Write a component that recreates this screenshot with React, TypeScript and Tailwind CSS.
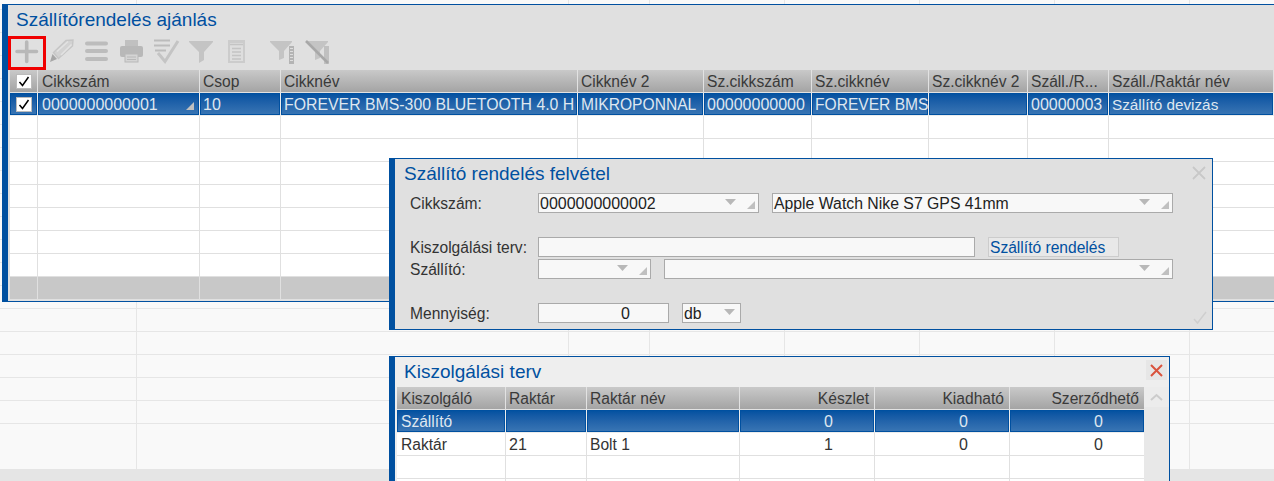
import React from "react";

const ICON = "#c4c4c4";

function BgRow({ h, line }: { h: string; line: boolean }) {
  const cell = `border-r border-[#e6e6e6] ${line ? "border-b" : ""}`;
  return (
    <div className={`grid grid-cols-[137px_432px_81px_135px_135px_135px_135px_84px] ${h}`}>
      <div className={cell} />
      <div className={cell} />
      <div className={cell} />
      <div className={cell} />
      <div className={cell} />
      <div className={cell} />
      <div className={cell} />
      <div className={line ? "border-b border-[#e6e6e6]" : ""} />
    </div>
  );
}

function Check() {
  return (
    <div className="w-[16px] h-[15px] bg-white border border-[#bbbbbb] flex items-center justify-center">
      <svg viewBox="0 0 14 13" className="w-[14px] h-[13px]">
        <path d="M2.5 7 L5.5 10.5 L11.5 2" fill="none" stroke="#000" strokeWidth="1.5" />
      </svg>
    </div>
  );
}

const Corner = ({ className }: { className: string }) => (
  <svg viewBox="0 0 8 8" className={`w-[8px] h-[8px] ${className}`}>
    <path d="M8 0 V8 H0 Z" fill="#c0c0c0" />
  </svg>
);

const Down = () => (
  <svg viewBox="0 0 11 6" className="w-[11px] h-[6px]">
    <path d="M0 0 H11 L5.5 6 Z" fill="#b8b8b8" />
  </svg>
);

const mainCols = "grid grid-cols-[28px_162px_81px_297px_126px_108px_117px_99px_81px_165px]";
const planCols = "grid grid-cols-[109px_81px_153px_135px_135px_135px]";

const hCell = "border-r border-[#e2e2e2] bg-linear-to-b from-[#c9c9c9] to-[#a4a4a4] text-[#3a3a3a] px-[3px] leading-[24px] overflow-hidden whitespace-nowrap";
const selCell = "border-r border-[#ececec] bg-linear-to-b from-[#0050a0] to-[#3a76b4] shadow-[inset_0_0_0_1px_#0050a0] text-[#dfe7f0] px-[3px] leading-[24px] overflow-hidden whitespace-nowrap";
const emptyCell = "border-r border-[#e0e0e0]";
const digits = "text-[16px]";

function MainEmptyRow({ gray }: { gray?: boolean }) {
  const c = emptyCell;
  return (
    <div className={`${mainCols} h-[23px] border-b border-[#e0e0e0] ${gray ? "bg-[#c8c8c8]" : "bg-white"}`}>
      <div className={c} /><div className={c} /><div className={c} /><div className={c} /><div className={c} />
      <div className={c} /><div className={c} /><div className={c} /><div className={c} /><div />
    </div>
  );
}

function PlanEmptyRow() {
  const c = emptyCell;
  return (
    <div className={`${planCols} h-[23px] border-b border-[#e0e0e0] bg-white`}>
      <div className={c} /><div className={c} /><div className={c} /><div className={c} /><div className={c} /><div className={c} />
    </div>
  );
}

function MainPanel() {
  return (
    <div className="absolute left-[2px] top-[4px] w-[1272px] h-[298px] bg-[#e0e0e0] border-l-[6px] border-t border-b border-[#0050a0]">
      <div className="h-[31px] pl-[8px] pt-[4px] text-[19px] leading-[21px] text-[#0050a0]">Szállítórendelés ajánlás</div>
      <div className="relative h-[34px] pl-[2px] pt-[1px] flex">
        <div className="absolute left-0 top-0 w-[38px] h-[34px] border-[3px] border-[#f00000]" />
        <svg viewBox="10 37 34 28" className="w-[34px] h-[28px]">
          <path d="M17 51.5 H36.5 M26.7 42 V61.5" stroke="#b8b8b8" strokeWidth="3.6" strokeLinecap="round" fill="none" />
        </svg>
        <svg viewBox="44 37 35 28" className="w-[35px] h-[28px]">
          <path d="M50 62 L52.5 54 L57 59 Z" fill="#a6a6a6" />
          <path d="M53.5 52.5 L66 40.5 L73 40 L72.5 46 L58.5 58.5 Z" fill="#d2d2d2" stroke="#c6c6c6" strokeWidth="1.4" />
          <path d="M57 51.5 L68 41.5 M61 55 L71.5 44.5" fill="none" stroke="#e2e2e2" strokeWidth="1.6" />
        </svg>
        <svg viewBox="79 37 35 28" className="w-[35px] h-[28px]">
          <path d="M87 43.5 H106 M87 51 H106 M87 59 H106" stroke="#bcbcbc" strokeWidth="4" strokeLinecap="round" fill="none" />
        </svg>
        <svg viewBox="114 37 35 28" className="w-[35px] h-[28px]">
          <rect x="125" y="40" width="13" height="6" fill="#c0c0c0" />
          <rect x="120" y="46" width="23" height="11" rx="2" fill="#b8b8b8" />
          <rect x="125" y="54" width="13" height="8" fill="#d4d4d4" stroke="#b8b8b8" />
          <path d="M127 57 H136 M127 59.5 H136" stroke="#b8b8b8" strokeWidth="1" />
        </svg>
        <svg viewBox="149 37 35 28" className="w-[35px] h-[28px]">
          <path d="M154 40.5 H170 M154 45.5 H170 M155 50.5 H166" stroke="#bcbcbc" strokeWidth="1.8" fill="none" />
          <path d="M158 53 L165 61.5 L178 41" stroke="#c4c4c4" strokeWidth="3" fill="none" />
        </svg>
        <svg viewBox="184 37 35 28" className="w-[35px] h-[28px]">
          <path d="M189 41 H213 V42 L204 52 V60 L199 63 V52 L189 42 Z" fill={ICON} />
        </svg>
        <svg viewBox="219 37 35 28" className="w-[35px] h-[28px]">
          <rect x="228" y="40" width="17" height="23" fill="#cccccc" />
          <rect x="230" y="43" width="13" height="18" fill="#dedede" />
          <path d="M230 44.5 H243 M232 48.5 H241 M232 52 H241 M232 55.5 H241 M232 59 H241" stroke="#c4c4c4" strokeWidth="1.5" fill="none" />
        </svg>
        <div className="w-[9px]" />
        <svg viewBox="263 37 36 28" className="w-[36px] h-[28px]">
          <path d="M270 41 H292 V42 L284 51 V58 L279 60 V51 L270 42 Z" fill={ICON} />
          <rect x="289" y="46" width="5" height="18" fill="#b4b4b4" />
          <path d="M290 48.5 H293 M290 51.5 H293 M290 54.5 H293 M290 57.5 H293 M290 60.5 H293" stroke="#dedede" strokeWidth="1" />
        </svg>
        <svg viewBox="299 37 36 28" className="w-[36px] h-[28px]">
          <path d="M306 41 H328 V42 L320 51 V58 L315 60 V51 L306 42 Z" fill={ICON} />
          <rect x="324" y="46" width="5" height="18" fill="#c0c0c0" />
          <path d="M306 41 L328 63" stroke="#a8a8a8" strokeWidth="2.6" />
        </svg>
      </div>
      <div className="pl-[2px] w-[1266px] text-[15.6px]">
        <div className={`${mainCols} h-[23px] border-b border-[#e2e2e2]`}>
          <div className={`${hCell} flex items-center justify-center !px-0`}><Check /></div>
          <div className={`${hCell} !pl-[4px]`}>Cikkszám</div>
          <div className={hCell}>Csop</div>
          <div className={hCell}>Cikknév</div>
          <div className={hCell}>Cikknév 2</div>
          <div className={hCell}>Sz.cikkszám</div>
          <div className={hCell}>Sz.cikknév</div>
          <div className={hCell}>Sz.cikknév 2</div>
          <div className={hCell}>Száll./R...</div>
          <div className={hCell}>Száll./Raktár név</div>
        </div>
        <div className={`${mainCols} h-[23px] border-b border-[#ececec]`}>
          <div className={`${selCell} flex items-center justify-center !px-0`}><Check /></div>
          <div className={`${selCell} ${digits} relative !pl-[4px]`}>0000000000001<Corner className="absolute right-[5px] top-[9px]" /></div>
          <div className={`${selCell} ${digits}`}>10</div>
          <div className={`${selCell} text-[15.85px]`}>FOREVER BMS-300 BLUETOOTH 4.0 H</div>
          <div className={selCell}>MIKROPONNAL</div>
          <div className={`${selCell} ${digits}`}>00000000000</div>
          <div className={`${selCell} !pr-[5px]`}>FOREVER BMS</div>
          <div className={selCell} />
          <div className={`${selCell} ${digits}`}>00000003</div>
          <div className={`${selCell} text-[15.3px]`}>Szállító devizás</div>
        </div>
        <MainEmptyRow />
        <MainEmptyRow />
        <MainEmptyRow />
        <MainEmptyRow />
        <MainEmptyRow />
        <MainEmptyRow />
        <MainEmptyRow />
        <MainEmptyRow gray />
      </div>
    </div>
  );
}

function Combo({ className, text }: { className: string; text?: string }) {
  return (
    <div className={`h-[20px] bg-[#f8f8f8] border border-[#aaaaaa] pl-[1px] leading-[20px] relative text-[#222222] ${className}`}>
      {text}
      <div className="absolute right-[22px] top-[5px]"><Down /></div>
      <Corner className="absolute right-[3px] top-[7px]" />
    </div>
  );
}

function OrderDialog() {
  const row = "flex h-[20px] pl-[15px]";
  const label = "w-[128px] text-[#333333] leading-[22px] text-[15.6px]";
  return (
    <div className="absolute left-[389px] top-[158px] w-[824px] h-[172px] bg-[#e0e0e0] border-l-[6px] border-t border-r border-b border-[#0050a0] text-[15.8px]">
      <div className="h-[34px] pl-[9px] pt-[4px] text-[19px] leading-[21px] text-[#0050a0]">Szállító rendelés felvétel</div>
      <svg viewBox="0 0 14 14" className="absolute right-[6px] top-[7px] w-[14px] h-[14px]">
        <path d="M1 1 L13 13 M13 1 L1 13" stroke="#c8c8c8" strokeWidth="1.8" />
      </svg>
      <div className={row}>
        <div className={label}>Cikkszám:</div>
        <Combo className={`w-[221px] ${digits}`} text="0000000000002" />
        <Combo className="w-[401px] ml-[13px]" text="Apple Watch Nike S7 GPS 41mm" />
      </div>
      <div className={`${row} mt-[24px]`}>
        <div className={label}>Kiszolgálási terv:</div>
        <div className="w-[437px] h-[20px] bg-[#f8f8f8] border border-[#aaaaaa]" />
        <div className="w-[131px] h-[20px] ml-[13px] bg-[#e8e8e8] border border-[#cccccc] text-[#0050a0] text-[15.6px] pl-[1px] leading-[20px]">Szállító rendelés</div>
      </div>
      <div className={`${row} mt-[2px]`}>
        <div className={label}>Szállító:</div>
        <Combo className="w-[113px]" />
        <Combo className="w-[509px] ml-[13px]" />
      </div>
      <div className={`${row} mt-[24px]`}>
        <div className={label}>Mennyiség:</div>
        <div className="w-[131px] h-[20px] bg-[#f8f8f8] border border-[#aaaaaa] pl-[82px] leading-[20px] text-[#222222] text-[16px]">0</div>
        <div className="w-[59px] h-[20px] ml-[13px] bg-[#f8f8f8] border border-[#aaaaaa] pl-[1px] leading-[20px] relative text-[#222222]">
          db
          <div className="absolute right-[5px] top-[5px]"><Down /></div>
        </div>
      </div>
      <svg viewBox="0 0 14 13" className="absolute right-[5px] bottom-[5px] w-[14px] h-[13px]">
        <path d="M1 8 L4.5 12 L13 1" fill="none" stroke="#cfcfcf" strokeWidth="1.5" />
      </svg>
    </div>
  );
}

function PlanDialog() {
  const r = "text-right !pr-[5px]";
  const sr = `${selCell} ${digits} text-right !pr-[41px]`;
  const wr = "border-r border-[#e0e0e0] px-[3px] leading-[24px] text-[#333333]";
  const wc = `${wr} ${digits} text-right !pr-[41px]`;
  return (
    <div className="absolute left-[389px] top-[356px] w-[781px] h-[140px] bg-[#eeeeee] border-l-[6px] border-t border-r border-[#0050a0] text-[15.6px]">
      <div className="h-[30px] pl-[9px] pt-[4px] text-[19px] leading-[21px] text-[#0050a0]">Kiszolgálási terv</div>
      <div className="absolute left-[751px] top-[3px] w-[21px] h-[20px] bg-[#e6e6e6] flex items-center justify-center">
        <svg viewBox="0 0 13 13" className="w-[13px] h-[13px]">
          <path d="M1 1 L12 12 M12 1 L1 12" stroke="#d9533d" strokeWidth="2" />
        </svg>
      </div>
      <div className="absolute left-[749px] top-[30px] w-[25px] h-[120px] bg-[#e8e8e8]">
        <div className="h-[20px] bg-[#ececec] flex items-center justify-center">
          <svg viewBox="0 0 13 8" className="w-[13px] h-[8px]">
            <path d="M1 7 L6.5 2 L12 7" fill="none" stroke="#cccccc" strokeWidth="2" />
          </svg>
        </div>
      </div>
      <div className="ml-[2px] w-[748px]">
        <div className={`${planCols} h-[23px] border-b border-[#e2e2e2]`}>
          <div className={`${hCell} !pl-[4px]`}>Kiszolgáló</div>
          <div className={hCell}>Raktár</div>
          <div className={hCell}>Raktár név</div>
          <div className={`${hCell} ${r}`}>Készlet</div>
          <div className={`${hCell} ${r}`}>Kiadható</div>
          <div className={`${hCell} ${r}`}>Szerződhető</div>
        </div>
        <div className={`${planCols} h-[23px] border-b border-[#ececec]`}>
          <div className={`${selCell} !pl-[4px]`}>Szállító</div>
          <div className={selCell} />
          <div className={selCell} />
          <div className={sr}>0</div>
          <div className={sr}>0</div>
          <div className={sr}>0</div>
        </div>
        <div className={`${planCols} h-[23px] border-b border-[#e0e0e0] bg-white`}>
          <div className={`${wr} !pl-[4px]`}>Raktár</div>
          <div className={`${wr} ${digits}`}>21</div>
          <div className={wr}>Bolt 1</div>
          <div className={wc}>1</div>
          <div className={wc}>0</div>
          <div className={wc}>0</div>
        </div>
        <PlanEmptyRow />
        <PlanEmptyRow />
      </div>
    </div>
  );
}

export default function App() {
  const rows = Array.from({ length: 19 });
  return (
    <div className="relative w-[1274px] h-[481px] overflow-hidden bg-[#e5e5e5] font-['Liberation_Sans',Arial,sans-serif]">
      <div className="bg-[#f9f9f9] h-[469px]">
        <BgRow h="h-[10px]" line />
        {rows.map((_, i) => (
          <BgRow key={i} h="h-[23px]" line={i < 18} />
        ))}
        <BgRow h="h-[22px]" line={false} />
      </div>
      <MainPanel />
      <OrderDialog />
      <PlanDialog />
    </div>
  );
}
